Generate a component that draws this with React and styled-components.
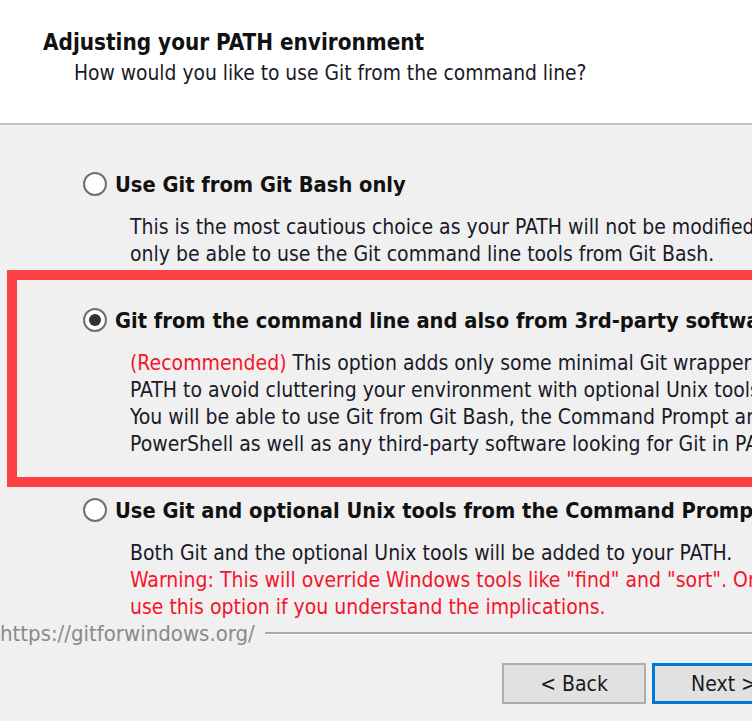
import React from 'react';
import styled, { createGlobalStyle } from 'styled-components';

const GlobalStyle = createGlobalStyle`
  html, body {
    margin: 0;
    padding: 0;
    overflow: hidden;
    background: #f0f0f0;
  }
`;

// --- Janela do instalador ---
const Window = styled.div`
  width: 752px;
  height: 721px;
  overflow: hidden;
  background: #f0f0f0;
  font-family: 'DejaVu Sans Condensed', 'DejaVu Sans', sans-serif;
  color: #1a1a28;
`;

const Header = styled.header`
  height: 125px;
  box-sizing: border-box;
  padding: 29px 0 0 43px;
  background: #ffffff;
  border-bottom: 2px solid #c3c3c3;
  white-space: nowrap;
`;

const Title = styled.h1`
  margin: 0;
  font-size: 22.3px;
  line-height: 26px;
  font-weight: bold;
  color: #111;
`;

const Subtitle = styled.p`
  margin: 5px 0 0 31px;
  font-size: 20.8px;
  line-height: 26px;
`;

const Body = styled.main`
  padding-top: 45px;
`;

const OptionList = styled.div`
  display: flex;
  flex-direction: column;
  gap: 38px;
  padding-left: 83px;
  margin-right: -400px;
  white-space: nowrap;
`;

const Option = styled.section`
  ${({ $highlighted }) =>
    $highlighted &&
    `
    margin: -36px 0 -29px -76px;
    padding: 26px 0 19px 66px;
    border: 10px solid #fc4146;
  `}
`;

const OptionLabel = styled.label`
  display: flex;
  align-items: center;
  gap: 8px;
  height: 28px;
  font-size: 21.7px;
  font-weight: bold;
  color: #111;
`;

const Radio = styled.span`
  flex: none;
  width: 24px;
  height: 24px;
  box-sizing: border-box;
  border-radius: 50%;
  border: 2px solid #707070;
  background: #fff;
  display: flex;
  align-items: center;
  justify-content: center;

  &::after {
    content: '';
    width: 12px;
    height: 12px;
    border-radius: 50%;
    background: ${({ $checked }) => ($checked ? '#333' : 'transparent')};
  }
`;

const Description = styled.div`
  margin-top: 16px;
  padding-left: 47px;
  font-size: 21px;
  line-height: 27px;
`;

const Line = styled.div`
  color: ${({ $warn }) => ($warn ? '#f5142a' : 'inherit')};
`;

const Red = styled.span`
  color: #f5142a;
`;

const Footer = styled.div`
  display: flex;
  align-items: center;
  gap: 10px;
  height: 24px;
`;

const Url = styled.span`
  font-size: 22px;
  color: #8a8a8a;
  white-space: nowrap;
`;

const Rule = styled.div`
  flex: 1;
  height: 2px;
  background: #a9a9a9;
  border-bottom: 1px solid #fff;
`;

const ButtonRow = styled.div`
  display: flex;
  gap: 6px;
  margin-top: 18px;
  padding-left: 502px;
`;

const Button = styled.button`
  flex: none;
  width: 144px;
  height: 41px;
  box-sizing: border-box;
  background: #e1e1e1;
  border: ${({ $primary }) => ($primary ? '3px solid #0078d7' : '2px solid #adadad')};
  font-family: inherit;
  font-size: 21px;
  color: #1a1a1a;
  padding: 0;
`;

const options = [
  {
    label: 'Use Git from Git Bash only',
    lines: [
      ['This is the most cautious choice as your PATH will not be modified. You will'],
      ['only be able to use the Git command line tools from Git Bash.'],
    ],
  },
  {
    label: 'Git from the command line and also from 3rd-party software',
    checked: true,
    highlighted: true,
    lines: [
      ['This option adds only some minimal Git wrappers to your', 'recommended'],
      ['PATH to avoid cluttering your environment with optional Unix tools.'],
      ['You will be able to use Git from Git Bash, the Command Prompt and the Windows'],
      ['PowerShell as well as any third-party software looking for Git in PATH.'],
    ],
  },
  {
    label: 'Use Git and optional Unix tools from the Command Prompt',
    lines: [
      ['Both Git and the optional Unix tools will be added to your PATH.'],
      ['Warning: This will override Windows tools like "find" and "sort". Only', 'warn'],
      ['use this option if you understand the implications.', 'warn'],
    ],
  },
];

export default function App() {
  return (
    <>
      <GlobalStyle />
      <Window>
        <Header>
          <Title>Adjusting your PATH environment</Title>
          <Subtitle>How would you like to use Git from the command line?</Subtitle>
        </Header>
        <Body>
          <OptionList>
            {options.map((opt) => (
              <Option key={opt.label} $highlighted={opt.highlighted}>
                <OptionLabel>
                  <Radio $checked={opt.checked} />
                  {opt.label}
                </OptionLabel>
                <Description>
                  {opt.lines.map(([text, kind]) => (
                    <Line key={text} $warn={kind === 'warn'}>
                      {kind === 'recommended' && <Red>(Recommended) </Red>}
                      {text}
                    </Line>
                  ))}
                </Description>
              </Option>
            ))}
          </OptionList>
          <Footer>
            <Url>https://gitforwindows.org/</Url>
            <Rule />
          </Footer>
          <ButtonRow>
            <Button>&lt; Back</Button>
            <Button $primary>Next &gt;</Button>
          </ButtonRow>
        </Body>
      </Window>
    </>
  );
}
